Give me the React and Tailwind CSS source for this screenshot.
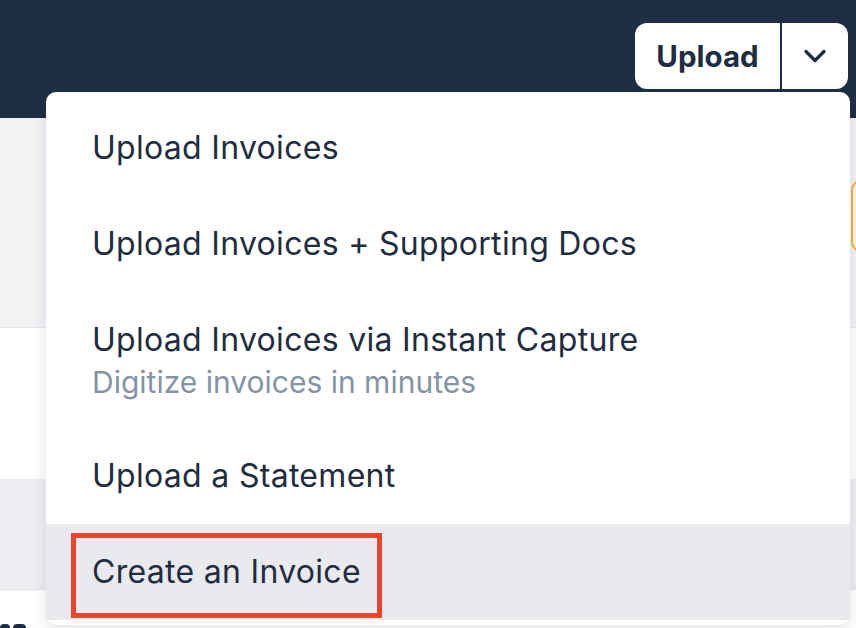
import { ChevronDown } from 'lucide-react'

const items = [
  { title: 'Upload Invoices' },
  { title: 'Upload Invoices + Supporting Docs' },
  { title: 'Upload Invoices via Instant Capture', sub: 'Digitize invoices in minutes' },
  { title: 'Upload a Statement' },
  { title: 'Create an Invoice', active: true }
]

const App = () => {
  return (
    <div className="relative w-[856px] h-[628px] overflow-hidden bg-white font-['Inter',sans-serif]">
      {/* Top bar */}
      <header className="h-[118px] bg-[#1e2f45] flex justify-end items-start pt-[23px] pr-[8px]">
        <div className="flex h-[66px] rounded-[12px] bg-white overflow-hidden">
          <button className="w-[145px] flex items-center justify-center text-[29.5px] font-bold text-[#1e2d42]">
            Upload
          </button>
          <div className="w-[2px] bg-[#1e2f45]" />
          <button className="w-[66px] flex items-center justify-center text-[#1e2d42]">
            <ChevronDown className="w-[36px] h-[36px]" strokeWidth={2.2} />
          </button>
        </div>
      </header>

      {/* Page content behind the menu */}
      <section className="h-[210px] bg-[#f2f3f5] border-b border-[#e2e5ea] flex justify-end items-start pt-[62px]">
        <div className="w-[60px] h-[72px] mr-[-55px] rounded-[10px] border-2 border-[#f0b43c] bg-[#fdf6e6]" />
      </section>
      <div className="h-[151px] bg-white" />
      <div className="h-[111px] bg-[#eceef2] border-b border-[#dfe2e7]" />
      <div className="h-[38px] bg-white flex items-end gap-[3px]">
        <div className="w-[10px] h-[4px] bg-[#1e2d42] rounded-t-sm" />
        <div className="w-[13px] h-[4px] bg-[#1e2d42] rounded-t-sm" />
      </div>

      {/* Dropdown menu */}
      <div className="absolute left-[46px] top-[92px] w-[804px] rounded-[10px] bg-white pt-[8px] pb-[5px] shadow-[0_4px_16px_rgba(15,23,42,0.12)]">
        {items.map((item, i) => (
          <div
            key={i}
            className={`relative px-[46px] py-[26px] ${item.active ? 'bg-[#e9eaee]' : ''}`}
          >
            <p className="text-[32px] leading-[44px] tracking-[0.3px] text-[#1e2d42]">{item.title}</p>
            {item.sub && (
              <p className="text-[30px] leading-[40px] text-[#8593a8]">{item.sub}</p>
            )}
            {item.active && (
              <div className="absolute left-[25px] top-[9px] w-[311px] h-[85px] border-[5px] border-[#e8452c]" />
            )}
          </div>
        ))}
      </div>
    </div>
  )
}

export default App
